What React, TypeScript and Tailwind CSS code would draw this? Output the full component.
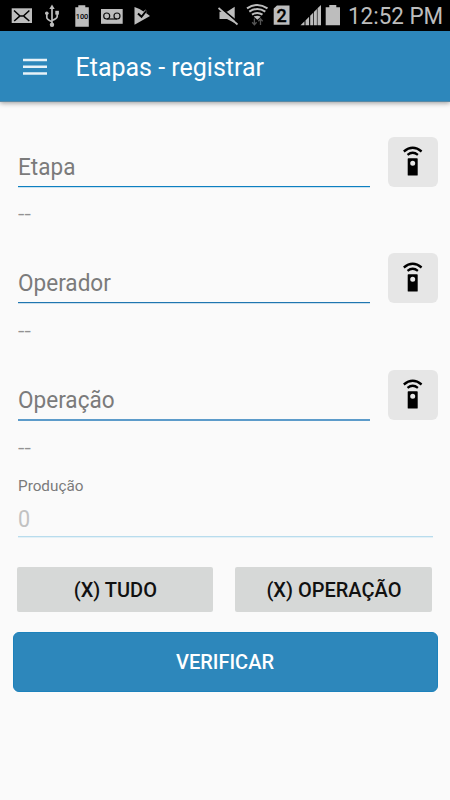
import React from "react";

function StatusBar() {
  return (
    <div className="flex h-[31px] items-start bg-black text-[#bdbdbd]">
      {/* mail */}
      <svg className="ml-[11px] h-[31px] w-[22px]" viewBox="11 0 22 31" fill="none">
        <rect x="11.7" y="8.3" width="20.3" height="14.7" fill="#bdbdbd" />
        <path d="M14 10.5l6 5.6h3.4l6-5.6M14.2 21l5.3-4.6M29.3 21l-5.3-4.6" stroke="#000" strokeWidth="1.5" />
      </svg>
      {/* usb */}
      <svg className="ml-[11px] h-[31px] w-[16px]" viewBox="44 0 16 31" fill="none" stroke="#bdbdbd" strokeWidth="1.7">
        <path d="M52 7v17M46.8 14v3.5q0 2 5.2 4.3M57.2 14v2.5q0 2-5.2 4" />
        <path d="M52 4.500l2.7 4.500h-5.400z" fill="#bdbdbd" stroke="none" />
        <circle cx="52" cy="24.8" r="2.2" fill="#bdbdbd" stroke="none" />
        <circle cx="46.8" cy="13.2" r="1.800" fill="#bdbdbd" stroke="none" />
        <rect x="55.3" y="10.8" width="3.6" height="3.8" fill="#bdbdbd" stroke="none" />
      </svg>
      {/* battery level */}
      <svg className="ml-[14px] h-[31px] w-[16px]" viewBox="74 0 16 31">
        <path d="M75.300 7.200h3V5.300h7v1.900h3.500v19.500H75.300z" fill="#bdbdbd" />
        <text x="82" y="19.2" textAnchor="middle" textLength="12.5" lengthAdjust="spacingAndGlyphs" fill="#000" className="font-['Roboto',sans-serif] text-[8px] font-medium">100</text>
      </svg>
      {/* voicemail */}
      <svg className="ml-[10px] h-[31px] w-[24px]" viewBox="100 0 24 31" fill="none" stroke="#111" strokeWidth="1.2">
        <rect x="101" y="9" width="21.7" height="14.8" fill="#bdbdbd" stroke="none" />
        <circle cx="106.7" cy="16" r="3" />
        <circle cx="117" cy="16" r="3" />
        <path d="M106.700 19H117" />
      </svg>
      {/* store update */}
      <svg className="ml-[9px] h-[31px] w-[18px]" viewBox="133 0 18 31" fill="none">
        <path d="M134.500 7l5 2 4 2.500 2-2 1.700 2-1.200 1.500 4 3-15.500 8.700z" fill="#bdbdbd" />
        <path d="M138 13.500l3.500 3.300 5-6.300" stroke="#000" strokeWidth="2" />
      </svg>
      <div className="grow" />
      {/* muted speaker */}
      <svg className="h-[31px] w-[22px]" viewBox="217 0 22 31" fill="none">
        <path d="M219.500 11.700h7.500l7.700-5V23l-7.700-4h-7.500z" fill="#bdbdbd" />
        <path d="M218.700 6.400l20 16.500" stroke="#000" strokeWidth="1.800" />
        <path d="M218.500 8l19 16.500" stroke="#bdbdbd" strokeWidth="1.700" />
      </svg>
      {/* wifi */}
      <svg className="ml-[7px] h-[31px] w-[23px]" viewBox="246 0 23 31" fill="none" stroke="#bdbdbd" strokeWidth="2">
        <path d="M247 8.300q10.200-6.800 20.500 0M249.300 11.600q8-5.200 16 0M252 14.700q5.300-3.500 10.500 0" />
        <path d="M253.800 16.700q3.500-2 7 0l-3.500 3z" fill="#bdbdbd" stroke="none" />
        <path d="M254.400 18.500v6M252.200 22.300l2.200 2.500 2.200-2.500M260.500 25v-6M258.300 21.200l2.200-2.500 2.200 2.500" stroke="#555" strokeWidth="1.300" />
      </svg>
      {/* second sim */}
      <svg className="ml-[4px] h-[31px] w-[17px]" viewBox="273 0 17 31">
        <path d="M273.700 8.500l3.300-3h12.500v19.300h-15.800z" fill="#bdbdbd" />
        <text x="281.700" y="21.500" textAnchor="middle" fill="#000" stroke="#000" strokeWidth=".3" className="font-['Roboto',sans-serif] text-[18px] font-medium">2</text>
      </svg>
      {/* signal */}
      <svg className="ml-[10px] h-[31px] w-[22px]" viewBox="300 0 22 31" fill="#bdbdbd">
        <path d="M300.500 25.300l4-4v4zM305.500 20.400l3.600-3.600v8.500h-3.600zM310.200 15.700l3-3v12.600h-3zM313.900 12l3-3v16.300h-3zM317.500 8.300l3.500-3.300v20.300h-3.500z" />
      </svg>
      {/* battery */}
      <svg className="ml-[3px] h-[31px] w-[16px]" viewBox="325 0 16 31" fill="#bdbdbd">
        <path d="M325.700 7.200h3.600V5h7v2.200h3.700v18h-14.300z" />
      </svg>
      <span className="ml-[7px] mr-[7px] w-[95px] whitespace-nowrap text-[23.5px] leading-[32px]">
        <span className="inline-block origin-left scale-x-[0.955]">12:52 PM</span>
      </span>
    </div>
  );
}

function RemoteButton() {
  return (
    <button aria-label="Ler" className="h-[50px] w-[50px] shrink-0 rounded-[6px] bg-[#e6e6e6]">
      <svg className="h-[50px] w-[50px]" viewBox="0 0 50 50" fill="none">
        <path d="M15.800 14.500q8.900-7.500 17.800 0M19.500 17.800q5.200-4 10.400 0" stroke="#000" strokeWidth="2.300" />
        <path fillRule="evenodd" d="M20.400 21.200h8.600q.7 0 .7.700v16q0 .7-.7.700h-8.600q-.7 0-.7-.7v-16q0-.7.700-.7zM24.700 23.800a2.500 2.500 0 100 5 2.500 2.500 0 000-5z" fill="#000" />
      </svg>
    </button>
  );
}

function ScanField({ label, line }: { label: string; line: string }) {
  return (
    <section className="h-[116.700px] pl-[17.500px] pr-[12.500px]">
      <div className="flex h-[50px] justify-between">
        <div className="w-[352.500px] pt-[14.300px]">
          <div className="h-[35px] text-[23.500px] leading-[32px] text-[#7b7b7b]">
            <span className="inline-block origin-left scale-x-[0.960]">{label}</span>
          </div>
          <div className={line} />
        </div>
        <RemoteButton />
      </div>
      <div className="pt-[15.800px] text-[17.500px] leading-[24px] text-[#929292]">
        <span className="inline-block origin-left scale-x-[1.320]">--</span>
      </div>
    </section>
  );
}

export default function App() {
  return (
    <main className="h-[800px] w-[450px] overflow-hidden bg-[#fafafa] font-['Roboto',sans-serif]">
      <StatusBar />
      <header className="flex h-[71px] items-center border-b border-[#5789a6] bg-[#2d87bb] pl-[23px] pt-[2px] text-white shadow-[0_1px_5px_rgba(0,0,0,0.4)]">
        <svg className="h-[18px] w-[24px]" viewBox="0 0 24 18" fill="#e8f2f8">
          <path d="M0 .7h24v2.600H0zM0 7.500h24v2.600H0zM0 14.200h24v2.600H0z" />
        </svg>
        <h1 className="ml-[28.500px] pt-[1px] text-[25px] leading-[32px]">Etapas - registrar</h1>
      </header>
      <div className="pt-[34.500px]">
        <ScanField label="Etapa" line="h-[2px] border-b border-[#c9e2f0] bg-[#0d7fc0]" />
        <ScanField label="Operador" line="h-[2px] border-b border-[#cadeeb] bg-[#1f76b0]" />
        <ScanField label="Operação" line="h-[2px] bg-[#5c9bca]" />
      </div>
      <section className="mx-[17.500px] -mt-[10.600px] h-[62px]">
        <div className="text-[15.500px] leading-[20px] text-[#7b7b7b]">
          <span className="inline-block origin-left scale-x-[0.985]">Produção</span>
        </div>
        <div className="mt-[8px] h-[32px] text-[23.500px] leading-[30px] text-[#c2c2c2]">
          <span className="inline-block origin-left scale-x-[0.920]">0</span>
        </div>
        <div className="h-[2px] border-b border-[#e3f0f6] bg-[#b8dced]" />
      </section>
      <div className="ml-[17.400px] mr-[17.600px] mt-[29px] flex h-[45px] justify-between text-[20px] font-medium text-[#111]">
        <button className="h-[45px] w-[196px] rounded-[2px] bg-[#d6d8d7] pt-[1px]">(X) TUDO</button>
        <button className="h-[45px] w-[197px] rounded-[2px] bg-[#d6d8d7] pt-[1px]">(X) OPERAÇÃO</button>
      </div>
      <button className="ml-[12.500px] mt-[20px] block h-[60px] w-[425px] rounded-[6px] border border-[#1c82bc] bg-[#2d87bb] pt-[1px] text-[20px] font-medium text-white">VERIFICAR</button>
    </main>
  );
}
